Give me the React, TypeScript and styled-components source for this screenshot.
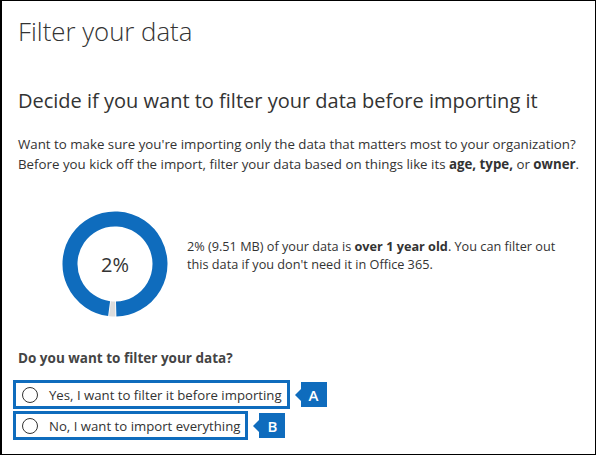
import React from "react";
import styled, { createGlobalStyle } from "styled-components";

const Global = createGlobalStyle`
  html, body { margin: 0; padding: 0; background: #fff; }
  body { font-family: "Open Sans", "Liberation Sans", sans-serif; color: #333; }
  * { box-sizing: border-box; }
`;

const BLUE = "#0f6cbd";

const Frame = styled.div`
  width: 596px;
  height: 455px;
  border: 1px solid #000;
  border-left-width: 2px;
  padding: 0 16px;
  display: flex;
  flex-direction: column;
  overflow: hidden;
`;

const Title = styled.h1`
  margin: 12px 0 0;
  font-size: 25.8px;
  font-weight: 300;
  line-height: 36px;
  color: #333;
`;

const Subtitle = styled.h2`
  margin: 38px 0 0;
  font-size: 20px;
  font-weight: 400;
  line-height: 28px;
  color: #333;
  white-space: nowrap;
`;

const Paragraph = styled.p`
  margin: 19px 0 0;
  font-size: 13.3px;
  line-height: 20px;
  color: #333;
  white-space: nowrap;
  b { font-weight: 700; }
`;

const ChartRow = styled.div`
  display: flex;
  align-items: flex-start;
  margin-top: 37px;
  padding-left: 44px;
  gap: 19px;
`;

const DonutWrap = styled.div`
  position: relative;
  width: 106px;
  height: 106px;
  flex: none;
`;

const DonutLabel = styled.div`
  position: absolute;
  inset: 0;
  display: flex;
  align-items: center;
  justify-content: center;
  font-size: 20px;
  color: #333;
`;

const ChartText = styled.p`
  margin: 26px 0 0;
  font-size: 12.7px;
  line-height: 18px;
  color: #333;
  white-space: nowrap;
  b { font-weight: 700; }
`;

const Question = styled.h3`
  margin: 31px 0 0;
  font-size: 13.5px;
  font-weight: 700;
  line-height: 20px;
  color: #444;
`;

const Options = styled.div`
  display: flex;
  flex-direction: column;
  gap: 2px;
  margin-top: 12px;
  margin-left: -5px;
`;

const OptionRow = styled.div`
  display: flex;
  align-items: center;
`;

const OptionBox = styled.label`
  display: flex;
  align-items: center;
  gap: 11px;
  height: 29px;
  padding: 0 5px 0 6px;
  border: 3px solid ${BLUE};
  font-size: 13.2px;
  color: #333;
  white-space: nowrap;
`;

const Radio = styled.span`
  width: 16px;
  height: 16px;
  border: 1.5px solid #333;
  border-radius: 50%;
  flex: none;
`;

const Tag = styled.span`
  position: relative;
  width: 26px;
  height: 25px;
  margin-left: 11px;
  background: ${BLUE};
  color: #fff;
  font-size: 15px;
  font-weight: 600;
  display: flex;
  align-items: center;
  justify-content: center;
  &::before {
    content: "";
    position: absolute;
    left: -6px;
    top: 50%;
    margin-top: -6px;
    border-style: solid;
    border-width: 6px 6px 6px 0;
    border-color: transparent ${BLUE} transparent transparent;
  }
`;

function arc(cx: number, cy: number, r: number, a0: number, a1: number) {
  const p = (a: number) => {
    const rad = ((a - 90) * Math.PI) / 180;
    return [cx + r * Math.cos(rad), cy + r * Math.sin(rad)];
  };
  const [x0, y0] = p(a0);
  const [x1, y1] = p(a1);
  const large = a1 - a0 > 180 ? 1 : 0;
  return `M ${x0} ${y0} A ${r} ${r} 0 ${large} 1 ${x1} ${y1}`;
}

function Donut() {
  return (
    <DonutWrap>
      <svg width="106" height="106" viewBox="0 0 106 106">
        <path d={arc(53, 53, 45, 187.5, 538.5)} fill="none" stroke={BLUE} strokeWidth="15" />
        <path d={arc(53, 53, 45, 179.5, 186.5)} fill="none" stroke="#dcdcdc" strokeWidth="15" />
      </svg>
      <DonutLabel>2%</DonutLabel>
    </DonutWrap>
  );
}

export default function App() {
  return (
    <>
      <Global />
      <Frame>
        <Title>Filter your data</Title>
        <Subtitle>Decide if you want to filter your data before importing it</Subtitle>
        <Paragraph>
          Want to make sure you're importing only the data that matters most to your organization?
          <br />
          Before you kick off the import, filter your data based on things like its <b>age, type,</b> or <b>owner</b>.
        </Paragraph>
        <ChartRow>
          <Donut />
          <ChartText>
            2% (9.51 MB) of your data is <b>over 1 year old</b>. You can filter out
            <br />
            this data if you don't need it in Office 365.
          </ChartText>
        </ChartRow>
        <Question>Do you want to filter your data?</Question>
        <Options>
          <OptionRow>
            <OptionBox>
              <Radio />
              Yes, I want to filter it before importing
            </OptionBox>
            <Tag>A</Tag>
          </OptionRow>
          <OptionRow>
            <OptionBox>
              <Radio />
              No, I want to import everything
            </OptionBox>
            <Tag>B</Tag>
          </OptionRow>
        </Options>
      </Frame>
    </>
  );
}
